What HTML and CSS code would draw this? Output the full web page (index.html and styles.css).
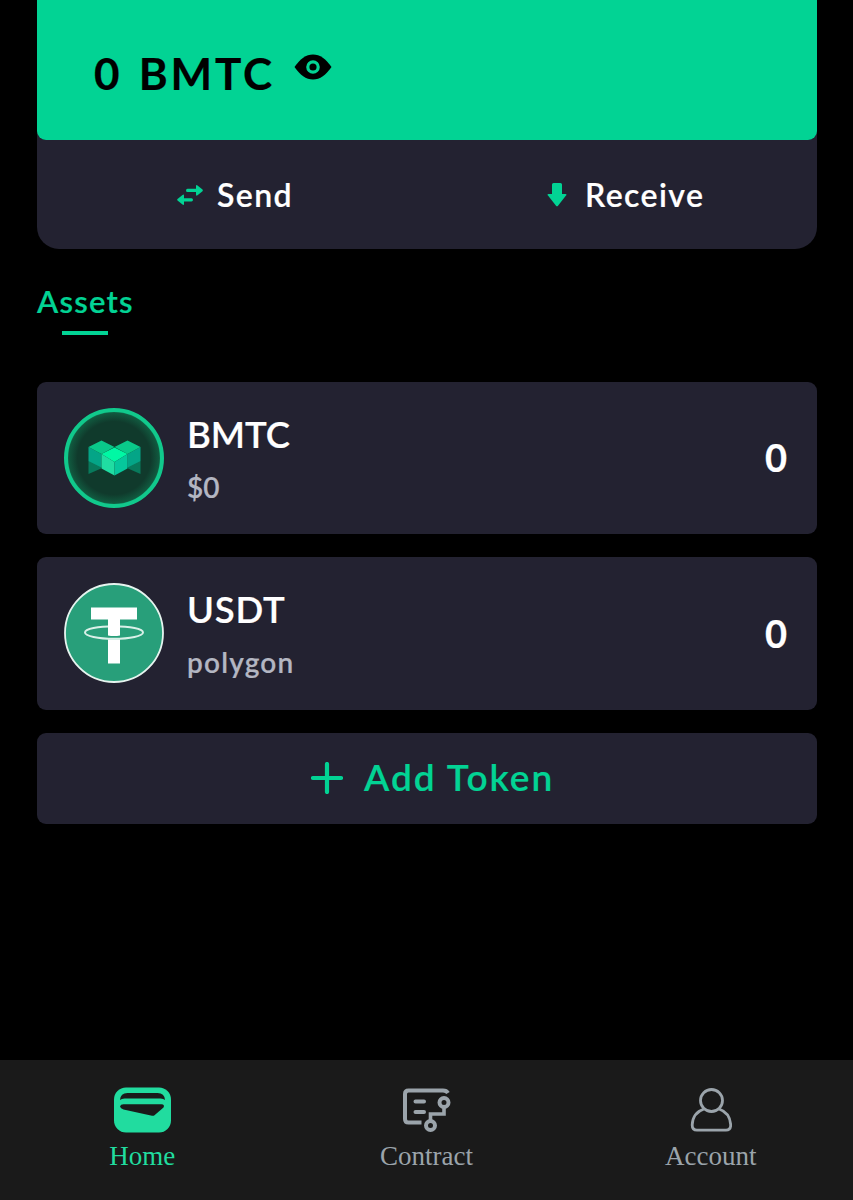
FILE: index.html
```html
<!DOCTYPE html>
<html lang="en">
<head>
    <meta charset="UTF-8">
    <meta name="viewport" content="width=device-width, initial-scale=1.0">
    <title>Wallet</title>
    <link rel="stylesheet" href="styles.css">
</head>
<body>

<main class="wallet">
    <section class="balance-card">
        <div class="balance">
            <span class="balance-value">0 BMTC</span>
            <svg class="eye-icon" width="38" height="26" viewBox="0 0 38 26">
                <path d="M.5 13C6 5 12 .5 19 .5S32 5 37.5 13C32 21 26 25.5 19 25.5S6 21 .5 13Z" fill="#000"/>
                <circle cx="19" cy="13" r="5.2" fill="none" stroke="#02d394" stroke-width="3.2"/>
            </svg>
        </div>
        <div class="actions">
            <a class="action action-send">
                <svg width="28" height="22" viewBox="0 0 28 22" fill="#02d394">
                    <path d="M11.5 4.8H20V2.2Q20 .4 21.5 1.6L26.5 5.6Q27.3 6.4 26.5 7.2L21.5 11.2Q20 12.4 20 10.6V8H11.5Q10 8 10 6.4T11.5 4.8Z"/>
                    <path d="M15.5 14.2H8V11.6Q8 9.8 6.5 11L1.5 15Q.7 15.8 1.5 16.6L6.5 20.6Q8 21.8 8 20V17.4H15.5Q17 17.4 17 15.8T15.5 14.2Z"/>
                </svg>
                <span>Send</span>
            </a>
            <a class="action action-receive">
                <svg width="20" height="26" viewBox="0 0 20 26" fill="#02d394">
                    <path d="M6.5 1H13.5Q15 1 15 2.5V12H18.5Q20.2 12.3 19 13.6L11 23.7Q10 24.8 9 23.7L1 13.6Q-.2 12.3 1.5 12H5V2.5Q5 1 6.5 1Z"/>
                </svg>
                <span>Receive</span>
            </a>
        </div>
    </section>

    <div class="tabs">
        <div class="tab active">Assets</div>
    </div>

    <section class="assets">
        <div class="asset">
            <svg class="asset-logo" width="100" height="100" viewBox="0 0 100 100">
                <defs>
                    <radialGradient id="coin-glow">
                        <stop offset="0.76" stop-color="#103a2c"/>
                        <stop offset="0.94" stop-color="#11593f"/>
                        <stop offset="1" stop-color="#109c6c"/>
                    </radialGradient>
                </defs>
                <circle cx="50" cy="50" r="48" fill="url(#coin-glow)" stroke="#11c98c" stroke-width="4"/>
                <path d="M24.5 53L37 50V60.5L24.5 66ZM76.5 53L64 50V60.5L76.5 66Z" fill="#087a5c"/>
                <path d="M24.5 39L37.5 46V59.5L24.5 53ZM76.5 39L63.5 46V59.5L76.5 53Z" fill="#04a587"/>
                <path d="M24.5 39L37.5 32.5L50.5 39L37.5 46ZM76.5 39L63.5 32.5L50.5 39L63.5 46Z" fill="#0ac98a"/>
                <path d="M37.5 46L50.5 39.5L63.5 46L50.5 54Z" fill="#00f8a4"/>
                <path d="M37.5 46L50.5 54V67.5L37.5 60.5Z" fill="#20dda2"/>
                <path d="M63.5 46L50.5 54V67.5L63.5 60.5Z" fill="#06c79c"/>
            </svg>
            <div class="asset-info">
                <div class="asset-name">BMTC</div>
                <div class="asset-sub asset-price">$0</div>
            </div>
            <div class="asset-amount">0</div>
        </div>

        <div class="asset">
            <svg class="asset-logo" width="100" height="100" viewBox="0 0 100 100">
                <circle cx="50" cy="50" r="49" fill="#289f7a" stroke="#e6f4ef" stroke-width="1.8"/>
                <ellipse cx="50" cy="49.5" rx="29" ry="6.3" fill="none" stroke="#d9f0e8" stroke-width="2"/>
                <path d="M27 24.5H73V36.5H56V52.5Q50 53.5 44 52.5V36.5H27ZM44 56.5H56V80.5H44Z" fill="#fff"/>
            </svg>
            <div class="asset-info">
                <div class="asset-name asset-usdt">USDT</div>
                <div class="asset-sub">polygon</div>
            </div>
            <div class="asset-amount">0</div>
        </div>

        <button class="add-token">
            <svg width="32" height="32" viewBox="0 0 32 32">
                <path d="M16 2V30M2 16H30" stroke="#02d394" stroke-width="4.2" stroke-linecap="round"/>
            </svg>
            <span>Add Token</span>
        </button>
    </section>
</main>

<nav class="bottom-nav">
    <a class="nav-item active">
        <svg width="58" height="46" viewBox="0 0 58 46">
            <rect x="1" y=".5" width="57" height="45" rx="12" fill="#21dc9f"/>
            <path d="M7 13Q7.5 6 14.5 6H44.5Q51.5 6 52 13Q50.5 11.5 47.5 11.5H11.5Q8.5 11.5 7 13Z" fill="#1a1a1a"/>
            <path d="M7 19.5Q7.5 17.3 10.5 17.3H48.5Q52 17.5 50.5 20.5L41.5 28.2Q40.5 29 39 28.7L10.5 22.5Q7.5 21.7 7 19.5Z" fill="#1a1a1a"/>
        </svg>
        <span>Home</span>
    </a>
    <a class="nav-item">
        <svg width="50" height="46" viewBox="0 0 50 46" fill="none" stroke="#9ba4ab" stroke-width="4">
            <path d="M20.5 35.5H7.5Q4 35.5 4 32V7Q4 3.5 7.5 3.5H42Q45.5 3.5 47 6"/>
            <path d="M14.5 14.5H23M14.5 25H23" stroke-linecap="round"/>
            <circle cx="43" cy="15.5" r="4.5"/>
            <circle cx="29.5" cy="38.5" r="4.5"/>
            <path d="M43 20V27H29.5V34" stroke-width="3.6"/>
        </svg>
        <span>Contract</span>
    </a>
    <a class="nav-item">
        <svg width="42" height="46" viewBox="0 0 42 46" fill="none" stroke="#9ba4ab" stroke-width="2.8">
            <circle cx="21.5" cy="13.5" r="11"/>
            <path d="M14 22C6.5 24.5 2.5 30 2.2 38Q2.2 43.2 7 43.2H36Q40.7 43.2 40.7 38C40.2 30 36.5 24.5 29 22"/>
        </svg>
        <span>Account</span>
    </a>
</nav>

</body>
</html>
```
FILE: styles.css
```css
* {
    box-sizing: border-box;
}

body {
    margin: 0;
    height: 1200px;
    display: flex;
    flex-direction: column;
    background: #000;
    color: #fff;
    font-family: Lato, sans-serif;
    font-weight: 600;
    overflow: hidden;
}

svg {
    display: block;
    flex: none;
}

.wallet {
    flex: 1;
    padding: 0 36px 0 37px;
    -webkit-text-stroke: 0.2px;
}

/* Balance card */
.balance-card {
    height: 249px;
    background: #232231;
    border-radius: 0 0 22px 22px;
}

.balance {
    display: flex;
    align-items: flex-start;
    height: 140px;
    padding: 50px 0 0 57px;
    background: #02d394;
    border-radius: 0 0 9px 9px;
    color: #000;
}

.balance-value {
    font-size: 44px;
    font-weight: 700;
    line-height: 46px;
    letter-spacing: 2.8px;
    word-spacing: 3px;
}

.eye-icon {
    margin: 4px 0 0 19px;
}

.actions {
    display: flex;
    height: 109px;
    font-size: 32px;
}

.action {
    display: flex;
    align-items: center;
    width: 50%;
}

.action span {
    letter-spacing: 1.4px;
}

.action-send {
    gap: 13px;
    padding-left: 139px;
}

.action-receive {
    gap: 18px;
    padding-left: 120px;
}

/* Tabs */
.tabs {
    display: flex;
    height: 132.5px;
    padding-top: 32px;
}

.tab {
    display: flex;
    flex-direction: column;
    align-items: center;
    font-size: 31px;
    line-height: 40px;
    letter-spacing: 1.2px;
}

.tab.active {
    color: #02d394;
}

.tab.active::after {
    content: '';
    width: 46px;
    height: 4px;
    margin: 10px 1px 0 0;
    background: #02d394;
}

/* Asset list */
.assets {
    display: flex;
    flex-direction: column;
    gap: 23px;
}

.asset {
    display: flex;
    align-items: center;
    height: 152.5px;
    padding: 0 30px 0 27px;
    background: #232231;
    border-radius: 9px;
}

.asset-info {
    flex: 1;
    padding-left: 23px;
}

.asset-name {
    font-size: 36.5px;
    line-height: 58px;
    letter-spacing: 0;
}

.asset-usdt {
    letter-spacing: 0.8px;
}

.asset-sub {
    color: #b3b6c2;
    font-size: 28px;
    line-height: 48px;
    letter-spacing: 1.2px;
}

.asset-price {
    letter-spacing: 0;
}

.asset-amount {
    padding-bottom: 1px;
    font-size: 38px;
    font-weight: 700;
}

.add-token {
    display: flex;
    align-items: center;
    gap: 21px;
    height: 91px;
    padding: 0 0 0 274px;
    border: none;
    border-radius: 9px;
    background: #232231;
    color: #02d394;
    font: inherit;
    font-size: 37px;
    letter-spacing: 2px;
}

.add-token span {
    padding-bottom: 3px;
}

/* Bottom navigation */
.bottom-nav {
    display: flex;
    height: 140px;
    background: #1a1a1a;
    color: #9ba4ab;
    font-family: "Liberation Serif", serif;
    font-size: 27px;
    font-weight: 400;
}

.nav-item {
    display: flex;
    flex: 1;
    flex-direction: column;
    align-items: center;
    gap: 7px;
    padding-top: 27px;
    line-height: 32px;
}

.nav-item.active {
    color: #21dc9f;
}
```
